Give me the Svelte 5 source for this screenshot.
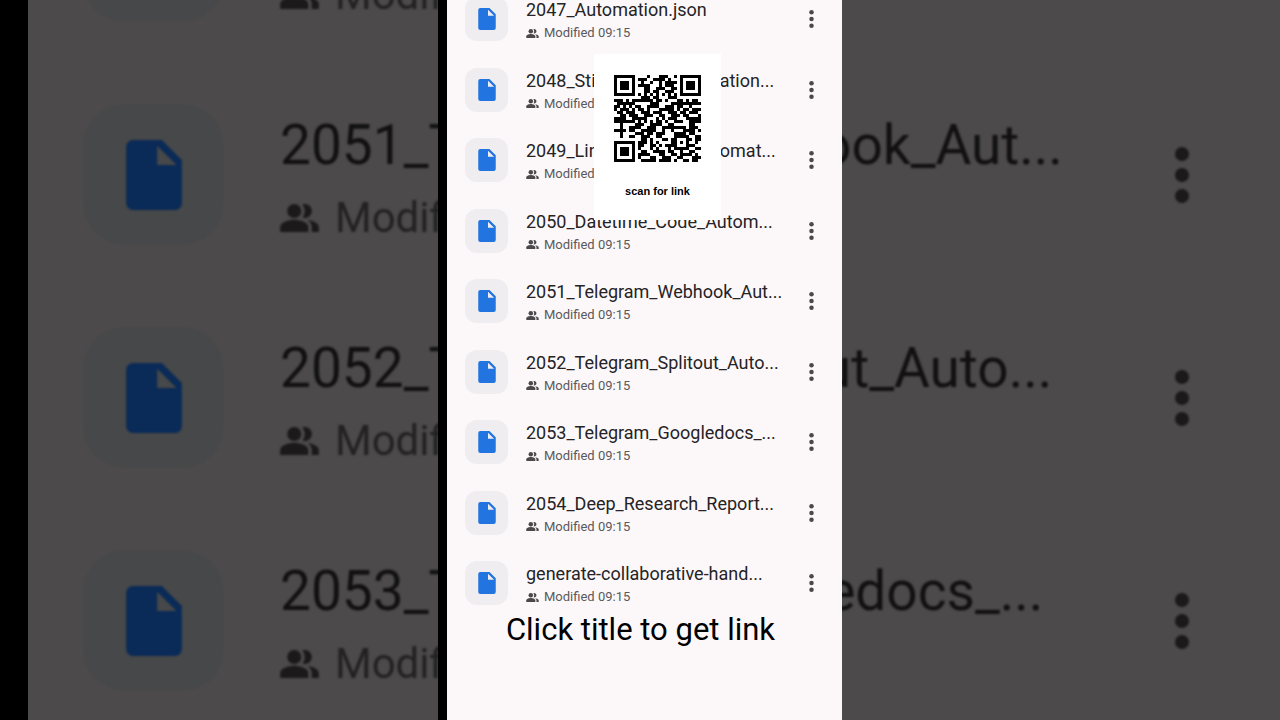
<script>
	const files = [
		'2047_Automation.json',
		'2048_Stickynote_Automation...',
		'2049_Linkedin_Http_Automat...',
		'2050_Datetime_Code_Autom...',
		'2051_Telegram_Webhook_Aut...',
		'2052_Telegram_Splitout_Auto...',
		'2053_Telegram_Googledocs_...',
		'2054_Deep_Research_Report...',
		'generate-collaborative-hand...'
	];

	const backdropFiles = files.slice(3, 7);

	const qr = [
		'11111110000100011100101111111',
		'10000010111001111010001000001',
		'10111010010010010111101011101',
		'10111010111100010111001011101',
		'10111010001100111001101011101',
		'10000010001101100111001000001',
		'11111110101010101010101111111',
		'00000000011101100011100000000',
		'11101011111110110100011010110',
		'01111110000011100001111111111',
		'11010101100111100111011001000',
		'10111010110100011111010110111',
		'01101110011101110011101101110',
		'00110111001110011001110110001',
		'11110011111000101011100011111',
		'11111110101010110100111001111',
		'00100001110011110011000001100',
		'00100111100111001111111101110',
		'11110110011111001001000111101',
		'00100001110110111000111101100',
		'00100110011100110000111110011',
		'00000000011010001101100011011',
		'11111110111010100001101010010',
		'10000010110011010111100011100',
		'10111010100010100010111110011',
		'10111010011001111011001001100',
		'10111010111100011001101111010',
		'10000010100011001110011000111',
		'11111110011111011110100110110'
	];

	// one path for all dark modules
	const qrPath = qr
		.map((row, y) => [...row].map((c, x) => (c === '1' ? `M${x} ${y}h1v1h-1z` : '')).join(''))
		.join('');
</script>

{#snippet fileIcon()}
	<svg class="file-icon" viewBox="0 0 167 210" aria-hidden="true">
		<path
			fill-rule="evenodd"
			d="M20 0H107L167 60V190a20 20 0 0 1-20 20H20a20 20 0 0 1-20-20V20A20 20 0 0 1 20 0zM93 17v58h58z"
		/>
	</svg>
{/snippet}

{#snippet people()}
	<svg class="people" viewBox="1 4 22 16" aria-hidden="true">
		<circle cx="9" cy="8" r="4" />
		<path d="M9 13c-2.67 0-8 1.34-8 4v3h16v-3c0-2.66-5.33-4-8-4z" />
		<path d="M15 12c2.21 0 4-1.79 4-4s-1.79-4-4-4c-.47 0-.91.1-1.33.24C14.5 5.27 15 6.58 15 8s-.5 2.73-1.33 3.76c.42.14.86.24 1.33.24z" />
		<path d="M16.67 13.13C18.04 14.06 19 15.32 19 17v3h4v-3c0-2.18-3.57-3.47-6.33-3.87z" />
	</svg>
{/snippet}

{#snippet dots()}
	<svg class="dots" viewBox="0 0 14 56" aria-hidden="true">
		<circle cx="7" cy="7" r="7" />
		<circle cx="7" cy="28" r="7" />
		<circle cx="7" cy="49" r="7" />
	</svg>
{/snippet}

{#snippet details(name)}
	<div class="tile">{@render fileIcon()}</div>
	<div class="info">
		<p class="name">{name}</p>
		<p class="meta">{@render people()}<span>Modified 09:15</span></p>
	</div>
{/snippet}

<div class="stage">
	<div class="backdrop" aria-hidden="true">
		{#each backdropFiles as name}
			<div class="row">
				{@render details(name)}
				<span class="more">{@render dots()}</span>
			</div>
		{/each}
	</div>

	<main class="phone">
		<ul class="list">
			{#each files as name}
				<li class="row">
					{@render details(name)}
					<button class="more" aria-label="More actions for {name}">{@render dots()}</button>
				</li>
			{/each}
		</ul>

		<div class="qr-card">
			<svg class="qr" viewBox="0 0 29 29" shape-rendering="crispEdges" role="img" aria-label="QR code">
				<path d={qrPath} />
			</svg>
			<p class="qr-label">scan for link</p>
		</div>

		<p class="caption">Click title to get link</p>
	</main>
</div>

<style>
	:global(body) {
		margin: 0;
		background: #000;
	}

	p {
		margin: 0;
	}

	.stage {
		position: relative;
		display: flex;
		justify-content: center;
		height: 100vh;
		overflow: hidden;
		background: #000;
		font-family: Roboto, 'Liberation Sans', sans-serif;
	}

	.row {
		display: flex;
		align-items: center;
		box-sizing: border-box;
	}

	.tile {
		display: flex;
		flex: none;
		align-items: center;
		justify-content: center;
	}

	.info {
		flex: 1;
		min-width: 0;
	}

	.name {
		white-space: nowrap;
	}

	.meta {
		display: flex;
		align-items: center;
		white-space: nowrap;
	}

	.more {
		display: flex;
		flex: none;
		align-items: center;
		justify-content: center;
		padding: 0;
		border: 0;
		background: transparent;
	}

	/* enlarged, darkened copy of the list behind the phone */
	.backdrop {
		position: absolute;
		inset: 0 0 0 28px;
		overflow: hidden;
		background: #4c4a4b;
		color: #121112;
	}

	.backdrop .row {
		height: 223px;
		padding: 0 60px 0 56px;
		filter: blur(1px);
	}

	.backdrop .row:first-child {
		margin-top: -160px;
	}

	.backdrop .tile {
		width: 139px;
		height: 139px;
		margin-right: 57px;
		border-radius: 40px;
		background: #464849;
	}

	.backdrop .file-icon {
		width: 56px;
		height: 70px;
		fill: #0a2a57;
	}

	.backdrop .info {
		padding-top: 4px;
	}

	.backdrop .name {
		font-size: 55px;
		line-height: 82px;
	}

	.backdrop .meta {
		gap: 16px;
		font-size: 42px;
		line-height: 64px;
		color: #232122;
	}

	.backdrop .people {
		width: 39px;
		height: 28px;
		fill: #1b191a;
	}

	.backdrop .more {
		width: 76px;
	}

	.backdrop .dots {
		width: 14px;
		height: 56px;
		fill: #1b191a;
	}

	.phone {
		position: relative;
		width: 395px;
		border-left: 9px solid #000;
		background: #fcf8f9;
		color: #252326;
	}

	.list {
		margin: -16px 0 0;
		padding: 0;
		list-style: none;
	}

	.list .row {
		height: 70px;
		padding: 0 19px 0 18px;
	}

	.list .row:nth-child(even) {
		height: 71px;
	}

	.list .tile {
		width: 43px;
		height: 44px;
		margin-right: 18px;
		border-radius: 12px;
		background: #efedf0;
	}

	.list .file-icon {
		width: 18px;
		height: 22px;
		fill: #2275e0;
	}

	.list .info {
		padding-top: 2px;
	}

	.list .name {
		font-size: 18px;
		line-height: 26px;
	}

	.list .meta {
		gap: 5px;
		font-size: 13px;
		line-height: 20px;
		color: #5b595c;
	}

	.list .people {
		width: 13px;
		height: 9px;
		fill: #4a484b;
	}

	.list .more {
		width: 24px;
		height: 40px;
		cursor: pointer;
	}

	.list .dots {
		width: 5px;
		height: 18px;
		fill: #4a484b;
	}

	.qr-card {
		position: absolute;
		top: 54px;
		left: 147px;
		display: flex;
		flex-direction: column;
		align-items: center;
		gap: 21px;
		box-sizing: border-box;
		width: 127px;
		padding: 21px 20px;
		background: #fff;
	}

	.qr {
		width: 87px;
		height: 87px;
	}

	.qr-label {
		font: bold 11px/16px 'Liberation Sans', Arial, sans-serif;
		color: #000;
		white-space: nowrap;
	}

	.caption {
		padding-right: 8px;
		font-size: 31px;
		line-height: 24px;
		text-align: center;
		color: #000;
	}
</style>
